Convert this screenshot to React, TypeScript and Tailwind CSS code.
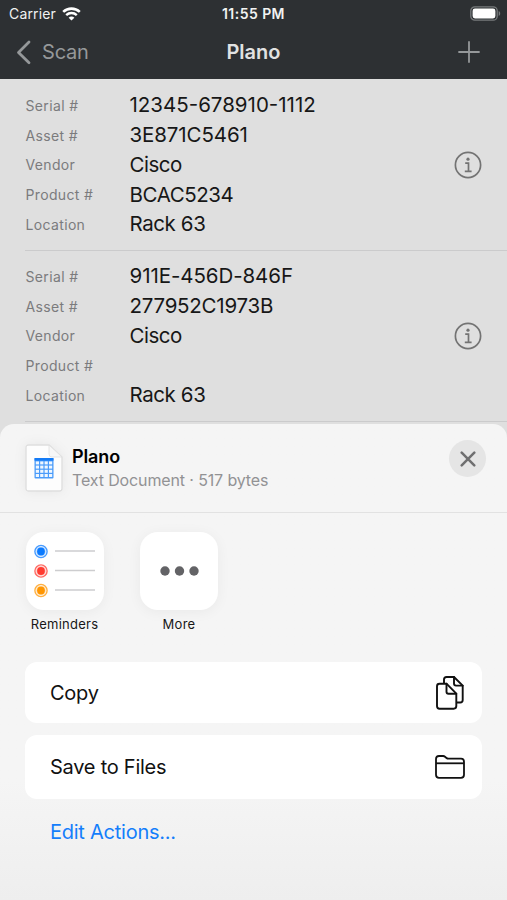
import React from "react";

type Field = { label: string; value: string; tracking?: string };

const records: Field[][] = [
  [
    { label: "Serial #", value: "12345-678910-1112", tracking: "tracking-normal" },
    { label: "Asset #", value: "3E871C5461", tracking: "tracking-[-0.1px]" },
    { label: "Vendor", value: "Cisco", tracking: "tracking-[-0.5px]" },
    { label: "Product #", value: "BCAC5234", tracking: "tracking-[-0.42px]" },
    { label: "Location", value: "Rack 63", tracking: "tracking-[-0.4px]" },
  ],
  [
    { label: "Serial #", value: "911E-456D-846F", tracking: "tracking-[-0.08px]" },
    { label: "Asset #", value: "277952C1973B", tracking: "tracking-[-0.25px]" },
    { label: "Vendor", value: "Cisco", tracking: "tracking-[-0.5px]" },
    { label: "Product #", value: "" },
    { label: "Location", value: "Rack 63", tracking: "tracking-[-0.4px]" },
  ],
];

function StatusBar() {
  return (
    <div className="grid h-[27px] grid-cols-3 items-center px-[6px] text-[#f1f2f2]">
      <div className="flex items-center gap-[6px] pl-[3px]">
        <span className="text-[14px] tracking-[0.15px]">Carrier</span>
        <svg width="19" height="14" viewBox="0 0 19 14" fill="none" stroke="#fff">
          <path d="M1.2 4.9C5.9.5 13.1.5 17.8 4.9" strokeWidth="2.6" />
          <path d="M4.2 8.1c3-2.8 7.6-2.8 10.6 0" strokeWidth="2.4" />
          <path d="M9.5 13.6 6.6 10.7c1.600-1.500 4.200-1.500 5.800 0Z" fill="#fff" stroke="none" />
        </svg>
      </div>
      <span className="text-center text-[14px] font-semibold tracking-[0.45px]">11:55 PM</span>
      <svg className="justify-self-end" width="31" height="15" viewBox="0 0 31 15">
        <rect x="0.8" y="0.8" width="26.4" height="13.4" rx="4" fill="none" stroke="#777a7c" strokeWidth="1.3" />
        <rect x="2.6" y="2.6" width="22.8" height="9.8" rx="2.4" fill="#fff" />
        <path d="M28.7 5c2 .7 2 4.3 0 5Z" fill="#777a7c" />
      </svg>
    </div>
  );
}

function NavBar() {
  return (
    <div className="grid h-[50px] grid-cols-3 items-center px-4 text-[20px]">
      <div className="flex items-center gap-[10px] text-[#95989a]">
        <svg width="16" height="25" viewBox="0 0 16 25" fill="none" stroke="currentColor" strokeWidth="2.8" strokeLinecap="round" strokeLinejoin="round">
          <path d="M13 2 2.500 12.400 13 22.800" />
        </svg>
        <span className="tracking-[-0.2px]">Scan</span>
      </div>
      <span className="text-center font-semibold text-[#e1e2e2]">Plano</span>
      <svg className="mr-[11px] justify-self-end" width="22" height="22" viewBox="0 0 22 22" stroke="#95989a" strokeWidth="1.8" strokeLinecap="round">
        <path d="M11 1v20M1 11h20" />
      </svg>
    </div>
  );
}

function InfoIcon() {
  return (
    <svg width="28" height="28" viewBox="0 0 28 28" fill="none" stroke="#737373" strokeWidth="1.7">
      <circle cx="14" cy="14" r="12.6" />
      <circle cx="14" cy="8.2" r="1.6" fill="#737373" stroke="none" />
      <path d="M11.2 12.200h3.300v8.200M10.800 20.400h6.800" />
    </svg>
  );
}

function Record({ fields }: { fields: Field[] }) {
  return (
    <div className="ml-[25px] flex h-[171px] shrink-0 items-center border-b border-[#cbcbcc] pr-[25px]">
      <div className="flex-1">
        {fields.map((f) => (
          <div key={f.label} className="flex h-[29.9px] items-center">
            <span className="w-[104.5px] pl-[0.5px] text-[14px] tracking-[0.35px] text-[#7b7b7d]">{f.label}</span>
            <span className={`text-[20.5px] text-[#171717] ${f.tracking ?? ""}`}>{f.value}</span>
          </div>
        ))}
      </div>
      <InfoIcon />
    </div>
  );
}

function DocIcon() {
  return (
    <svg className="drop-shadow-[0_0_6px_rgba(0,0,0,0.06)]" width="38" height="48" viewBox="0 0 38 48">
      <path d="M3.500 1h20.500l13 12v31.500q0 2.500-2.500 2.500h-31Q1 47 1 44.500v-41Q1 1 3.500 1Z" fill="#fdfdfd" stroke="#dedede" strokeWidth="1.300" />
      <path d="M24 1v9q0 3 3 3h10Z" fill="#f7f7f7" stroke="#dedede" strokeWidth="0.800" />
      <rect x="9.500" y="14" width="19" height="20.500" rx="1" fill="#4a9bfa" />
      <rect x="9.500" y="14" width="19" height="2.600" fill="#147bf6" />
      <g fill="#eff7ff">
        {[0, 1, 2, 3].map((r) =>
          [0, 1, 2, 3].map((c) => (
            <rect key={`${r}-${c}`} x={10.8 + c * 4.4} y={17.4 + r * 4.2} width="3.200" height="3" />
          )),
        )}
      </g>
    </svg>
  );
}

function RemindersIcon() {
  return (
    <svg width="78" height="78" viewBox="0 0 78 78">
      {["#0a7aff", "#ff3b30", "#ff9500"].map((color, i) => (
        <g key={color}>
          <circle cx="15" cy={19.5 + i * 19.5} r="6.1" fill="#fff" stroke={color} strokeOpacity="0.75" strokeWidth="1.4" />
          <circle cx="15" cy={19.5 + i * 19.5} r="5" fill={color} fillOpacity="0.25" />
          <circle cx="15" cy={19.5 + i * 19.5} r="3.9" fill={color} />
          <path d={`M29 ${19 + i * 19.5}h40`} stroke="#cdcdcf" strokeWidth="1.5" />
        </g>
      ))}
    </svg>
  );
}

function AppTile({ label, children }: { label: string; children: React.ReactNode }) {
  return (
    <div className="flex w-[78px] flex-col items-center">
      <div className="flex size-[78px] items-center justify-center rounded-[18px] bg-white shadow-[0_2px_14px_rgba(0,0,0,0.05)]">
        {children}
      </div>
      <span className="mt-[5px] text-[13px] leading-[18px] tracking-[0.25px] text-[#171717]">{label}</span>
    </div>
  );
}

function CopyIcon() {
  return (
    <svg width="28" height="34" viewBox="0 0 28 34" fill="none" stroke="#111" strokeWidth="1.9" strokeLinejoin="round" strokeLinecap="round">
      <path d="M8 7V3.500Q8 1 10.500 1H18l8.700 8.600V24q0 2.500-2.500 2.500H21" />
      <path d="M18 1v6.600q0 2 2 2h6.700" />
      <path d="M3.500 7.700h7l9.800 10v12.400q0 2.600-2.600 2.600H3.500Q1 32.700 1 30.100V10.200Q1 7.700 3.500 7.700Z" />
      <path d="M10.500 7.700v8q0 2 2 2h7.800" />
    </svg>
  );
}

function FolderIcon() {
  return (
    <svg width="30" height="24" viewBox="0 0 30 24" fill="none" stroke="#111" strokeWidth="1.8" strokeLinejoin="round">
      <path d="M1 19.800V4q0-3 3-3h4.200q1 0 1.800.7l1.500 1.300q.8.700 1.900.7H26q3 0 3 3v13.100q0 3-3 3H4q-3 0-3-3Z" />
      <path d="M1 8.300h28" />
    </svg>
  );
}

export default function App() {
  return (
    <div className="flex h-[900px] w-[507px] flex-col overflow-hidden bg-[#dfdfdf] font-['Inter','Liberation_Sans',sans-serif]">
      <header className="h-[79px] shrink-0 bg-[#2d3033]">
        <StatusBar />
        <NavBar />
      </header>
      <main className="flex h-[345px] shrink-0 flex-col pt-px">
        {records.map((fields, i) => (
          <Record key={i} fields={fields} />
        ))}
      </main>
      <section className="flex flex-1 flex-col rounded-t-[14px] bg-linear-to-b from-[#f5f5f5] from-75% to-[#eeeeee]">
        <div className="flex h-[89px] items-center border-b border-[#e2e2e2] pl-[25px] pr-[21px]">
          <DocIcon />
          <div className="ml-[9px] flex-1">
            <div className="text-[18px] leading-[24px] font-semibold tracking-[-0.1px] text-black">Plano</div>
            <div className="text-[16px] leading-[23px] tracking-[-0.13px] text-[#929294]">Text Document · 517 bytes</div>
          </div>
          <div className="mb-[19px] flex size-[37px] items-center justify-center rounded-full bg-[#e5e5e5]">
            <svg width="16" height="16" viewBox="0 0 16 16" stroke="#6f6f70" strokeWidth="2.5" strokeLinecap="round">
              <path d="m1.700 1.700 12.600 12.600M14.300 1.700 1.700 14.300" />
            </svg>
          </div>
        </div>
        <div className="flex gap-[36.5px] pt-[19px] pl-[25.5px]">
          <AppTile label="Reminders">
            <RemindersIcon />
          </AppTile>
          <AppTile label="More">
            <svg width="39" height="10" viewBox="0 0 39 10" fill="#636366">
              <circle cx="5" cy="5" r="4.7" />
              <circle cx="19.5" cy="5" r="4.7" />
              <circle cx="34" cy="5" r="4.7" />
            </svg>
          </AppTile>
        </div>
        <div className="mt-[29px] flex flex-col gap-3 px-[25px] text-[20px] tracking-[-0.25px] text-[#111]">
          <div className="flex h-[61px] items-center justify-between rounded-[12px] bg-white pr-[18px] pl-[25px]">
            <span>Copy</span>
            <CopyIcon />
          </div>
          <div className="flex h-[64px] items-center justify-between rounded-[12px] bg-white pr-[17px] pl-[25px]">
            <span>Save to Files</span>
            <FolderIcon />
          </div>
          <div className="flex h-[42px] items-center pl-[25px] text-[#147efb]">Edit Actions...</div>
        </div>
      </section>
    </div>
  );
}
